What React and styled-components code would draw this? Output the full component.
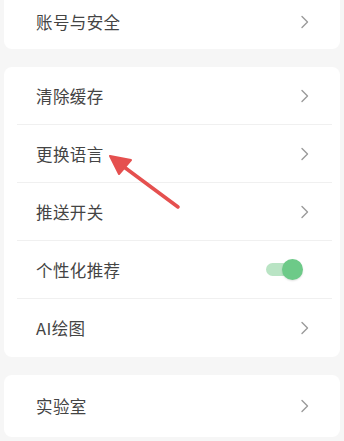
import React from 'react'
import styled, { createGlobalStyle } from 'styled-components'

const GlobalStyle = createGlobalStyle`
  html, body {
    margin: 0;
    padding: 0;
    background: #f6f6f6;
  }
  body {
    font-family: "Noto Sans CJK SC", "Noto Sans", sans-serif;
  }
`

const Page = styled.div`
  position: relative;
  width: 344px;
  height: 441px;
  overflow: hidden;
  background: #f6f6f6;
  display: flex;
  flex-direction: column;
  gap: 18px;
  padding: 0 4px;
  box-sizing: border-box;
`

const Card = styled.div`
  background: #fff;
  border-radius: ${p => p.$top ? '0 0 8px 8px' : '8px'};
  display: flex;
  flex-direction: column;
`

const Row = styled.div`
  height: ${p => p.$h || 58}px;
  box-sizing: border-box;
  padding: ${p => p.$pb ? `0 0 ${p.$pb}px` : '0'} 0;
  margin: 0 8px 0 13px;
  display: flex;
  align-items: center;
  justify-content: space-between;
  border-bottom: ${p => p.$divider ? '1px solid #f0f0f0' : 'none'};
`

const Label = styled.span`
  font-size: 16.5px;
  color: #444;
  padding-left: 19px;
  letter-spacing: 0.4px;
`

const Chevron = styled.svg`
  width: 10px;
  height: 14px;
  margin-right: 22px;
`

const Track = styled.div`
  position: relative;
  width: 30px;
  height: 13px;
  border-radius: 7px;
  background: #b9e4c4;
  margin-right: 36px;
`

const Knob = styled.div`
  position: absolute;
  right: -7px;
  top: -4px;
  width: 21px;
  height: 21px;
  border-radius: 50%;
  background: #6dca88;
  box-shadow: 0 1px 2px rgba(0, 0, 0, 0.12);
`

const Arrow = styled.svg`
  position: absolute;
  left: 0;
  top: 0;
  pointer-events: none;
`

const Arrow1 = () => (
  <Chevron viewBox="0 0 10 14">
    <path d="M2 1.5 L7.5 7 L2 12.5" fill="none" stroke="#9a9a9a" strokeWidth="1.4" strokeLinecap="round" strokeLinejoin="round" />
  </Chevron>
)

const groups = [
  ['清除缓存', '更换语言', '推送开关', '个性化推荐', 'AI绘图'],
]

export default function App() {
  return (
    <>
      <GlobalStyle />
      <Page>
        <Card $top>
          <Row $h={49} $pb={6}>
            <Label>账号与安全</Label>
            <Arrow1 />
          </Row>
        </Card>
        <Card>
          {groups[0].map((name, i) => (
            <Row key={name} $divider={i < groups[0].length - 1}>
              <Label>{name}</Label>
              {name === '个性化推荐' ? (
                <Track><Knob /></Track>
              ) : (
                <Arrow1 />
              )}
            </Row>
          ))}
        </Card>
        <Card>
          <Row $h={62}>
            <Label>实验室</Label>
            <Arrow1 />
          </Row>
        </Card>
        <Arrow width="344" height="441" viewBox="0 0 344 441">
          <line x1="178" y1="207" x2="120" y2="164" stroke="#e5504f" strokeWidth="3.6" strokeLinecap="round" />
          <polygon points="110,156 131,160 119,174" fill="#e5504f" stroke="#e5504f" strokeWidth="2" strokeLinejoin="round" />
        </Arrow>
      </Page>
    </>
  )
}
